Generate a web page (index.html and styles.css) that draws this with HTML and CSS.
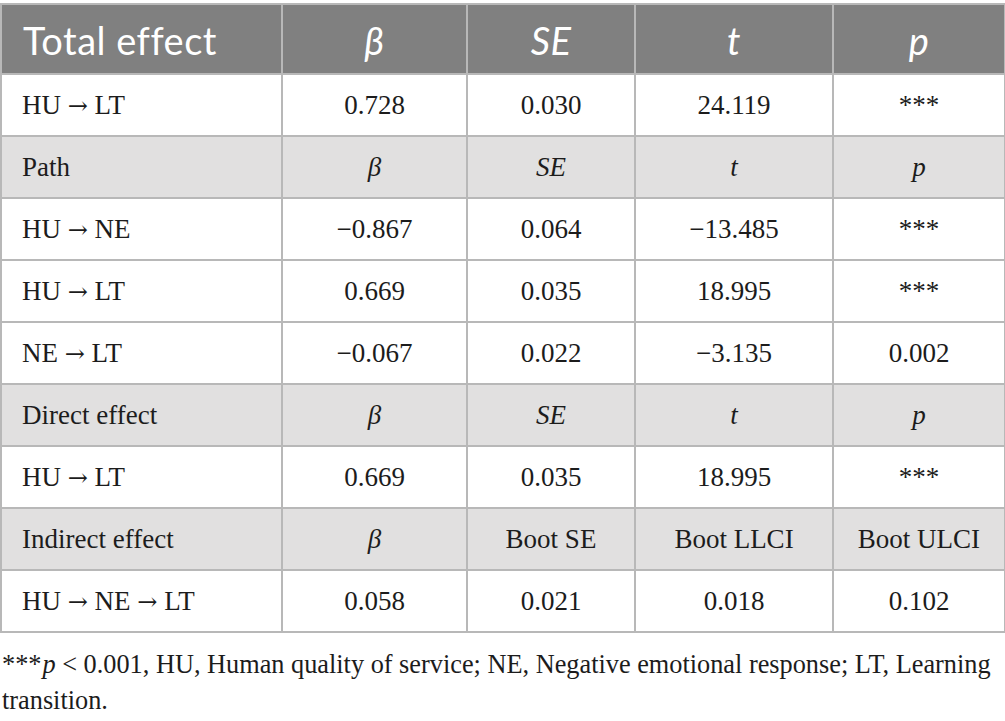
FILE: index.html
```html
<!DOCTYPE html>
<html>
<head>
<meta charset="utf-8">
<link rel="stylesheet" href="styles.css">
</head>
<body>
<table class="stats">
  <colgroup>
    <col class="c1"><col class="c2"><col class="c3"><col class="c4"><col class="c5">
  </colgroup>
  <thead>
    <tr class="head">
      <th class="first">Total effect</th>
      <th><i>β</i></th>
      <th><i>SE</i></th>
      <th><i>t</i></th>
      <th><i>p</i></th>
    </tr>
  </thead>
  <tbody>
    <tr><td class="first">HU <span class="arr">→</span> LT</td><td>0.728</td><td>0.030</td><td>24.119</td><td>***</td></tr>
    <tr class="band"><td class="first">Path</td><td><i>β</i></td><td><i>SE</i></td><td><i>t</i></td><td><i>p</i></td></tr>
    <tr><td class="first">HU <span class="arr">→</span> NE</td><td>−0.867</td><td>0.064</td><td>−13.485</td><td>***</td></tr>
    <tr><td class="first">HU <span class="arr">→</span> LT</td><td>0.669</td><td>0.035</td><td>18.995</td><td>***</td></tr>
    <tr><td class="first">NE <span class="arr">→</span> LT</td><td>−0.067</td><td>0.022</td><td>−3.135</td><td>0.002</td></tr>
    <tr class="band"><td class="first">Direct effect</td><td><i>β</i></td><td><i>SE</i></td><td><i>t</i></td><td><i>p</i></td></tr>
    <tr><td class="first">HU <span class="arr">→</span> LT</td><td>0.669</td><td>0.035</td><td>18.995</td><td>***</td></tr>
    <tr class="band"><td class="first">Indirect effect</td><td><i>β</i></td><td>Boot SE</td><td>Boot LLCI</td><td>Boot ULCI</td></tr>
    <tr><td class="first">HU <span class="arr">→</span> NE <span class="arr">→</span> LT</td><td>0.058</td><td>0.021</td><td>0.018</td><td>0.102</td></tr>
  </tbody>
</table>
<p class="note"><span class="stars">***</span><i class="pv">p</i> &lt; 0.001, HU, Human quality of service; NE, Negative emotional response; LT, Learning transition.</p>
</body>
</html>
```

FILE: styles.css
```css
html, body {
  margin: 0;
  padding: 0;
  background: #ffffff;
}
body {
  padding-top: 3px;
  width: 1005px;
}
.stats {
  border-collapse: collapse;
  table-layout: fixed;
  width: 1004px;
  font-family: "Liberation Serif", "Times New Roman", serif;
  font-size: 27px;
  color: #1c1c1c;
}
.c1 { width: 281px; }
.c2 { width: 185px; }
.c3 { width: 168px; }
.c4 { width: 198px; }
.c5 { width: 172px; }
.stats th, .stats td {
  border: 2px solid #b8b8b8;
  text-align: center;
  padding: 0 8px;
  white-space: nowrap;
}
.stats td {
  height: 60px;
}
.stats .first {
  text-align: left;
  padding-left: 20px;
}
.arr {
  font-family: "DejaVu Serif", serif;
  font-size: 24px;
}
.head th {
  background: #808080;
  color: #ffffff;
  font-family: "Lato", "Open Sans", sans-serif;
  font-weight: 400;
  font-size: 38px;
  letter-spacing: 0.5px;
  height: 66px;
  padding-top: 2px;
}
.head th.first {
  padding-left: 21px;
}
.band td {
  background: #e1e0e0;
}
.note {
  margin: 14px 0 0 2px;
  font-family: "Liberation Serif", "Times New Roman", serif;
  font-size: 26.3px;
  line-height: 36px;
  color: #1c1c1c;
  width: 1000px;
}
.stars {
  margin-right: 1px;
}
```
